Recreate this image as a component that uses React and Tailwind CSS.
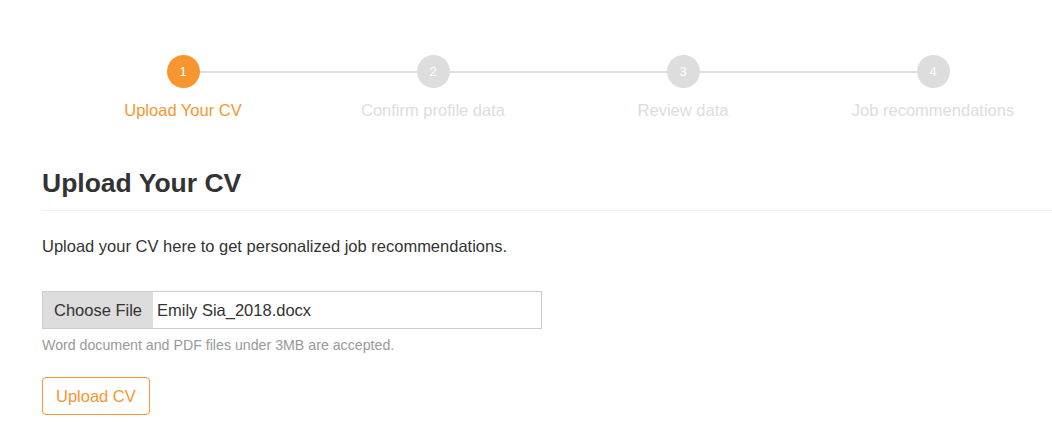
import React from "react";

const steps = [
  { n: 1, label: "Upload Your CV", active: true },
  { n: 2, label: "Confirm profile data" },
  { n: 3, label: "Review data" },
  { n: 4, label: "Job recommendations" },
];

export default function App() {
  return (
    <div
      className="w-[1052px] h-[431px] overflow-hidden bg-white text-[#333]"
      style={{ fontFamily: '"Liberation Sans", Arial, sans-serif' }}
    >
      <div className="flex pl-[58px] pt-[55px]">
        {steps.map((s, i) => (
          <div key={s.n} className="relative w-[250px] shrink-0 flex flex-col items-center">
            {i < steps.length - 1 && (
              <div className="absolute left-1/2 top-[16px] h-[2px] w-[250px] bg-[#ddd]" />
            )}
            <div
              className={`relative z-10 w-[33px] h-[33px] rounded-full flex items-center justify-center text-[13px] text-white ${
                s.active ? "bg-[#f7962f]" : "bg-[#ddd]"
              }`}
            >
              {s.n}
            </div>
            <div
              className={`mt-[11px] text-[16.5px] leading-[22px] whitespace-nowrap ${
                s.active ? "text-[#f7962f]" : "text-[#ddd]"
              }`}
            >
              {s.label}
            </div>
          </div>
        ))}
      </div>

      <div className="pl-[42px] mt-[46px]">
        <h1 className="text-[26.5px] leading-[32px] font-bold text-[#333]">Upload Your CV</h1>
      </div>
      <div className="ml-[42px] mt-[11px] border-t border-[#eee]" />

      <div className="pl-[42px]">
        <p className="mt-[24px] text-[16.5px] leading-[22px] text-[#333]">
          Upload your CV here to get personalized job recommendations.
        </p>

        <div className="mt-[34px] flex w-[500px] h-[38px] border border-[#ccc]">
          <div className="w-[110px] bg-[#ddd] flex items-center justify-center text-[16.5px] text-[#333]">
            Choose File
          </div>
          <div className="flex items-center pl-[4px] text-[16.5px] text-[#333]">
            Emily Sia_2018.docx
          </div>
        </div>
        <p className="mt-[7px] text-[14.2px] leading-[19px] text-[#999]">
          Word document and PDF files under 3MB are accepted.
        </p>

        <button className="mt-[22px] h-[38px] px-[13px] border border-[#f7962f] rounded-[4px] text-[16.5px] text-[#f7962f] bg-white">
          Upload CV
        </button>
      </div>
    </div>
  );
}
